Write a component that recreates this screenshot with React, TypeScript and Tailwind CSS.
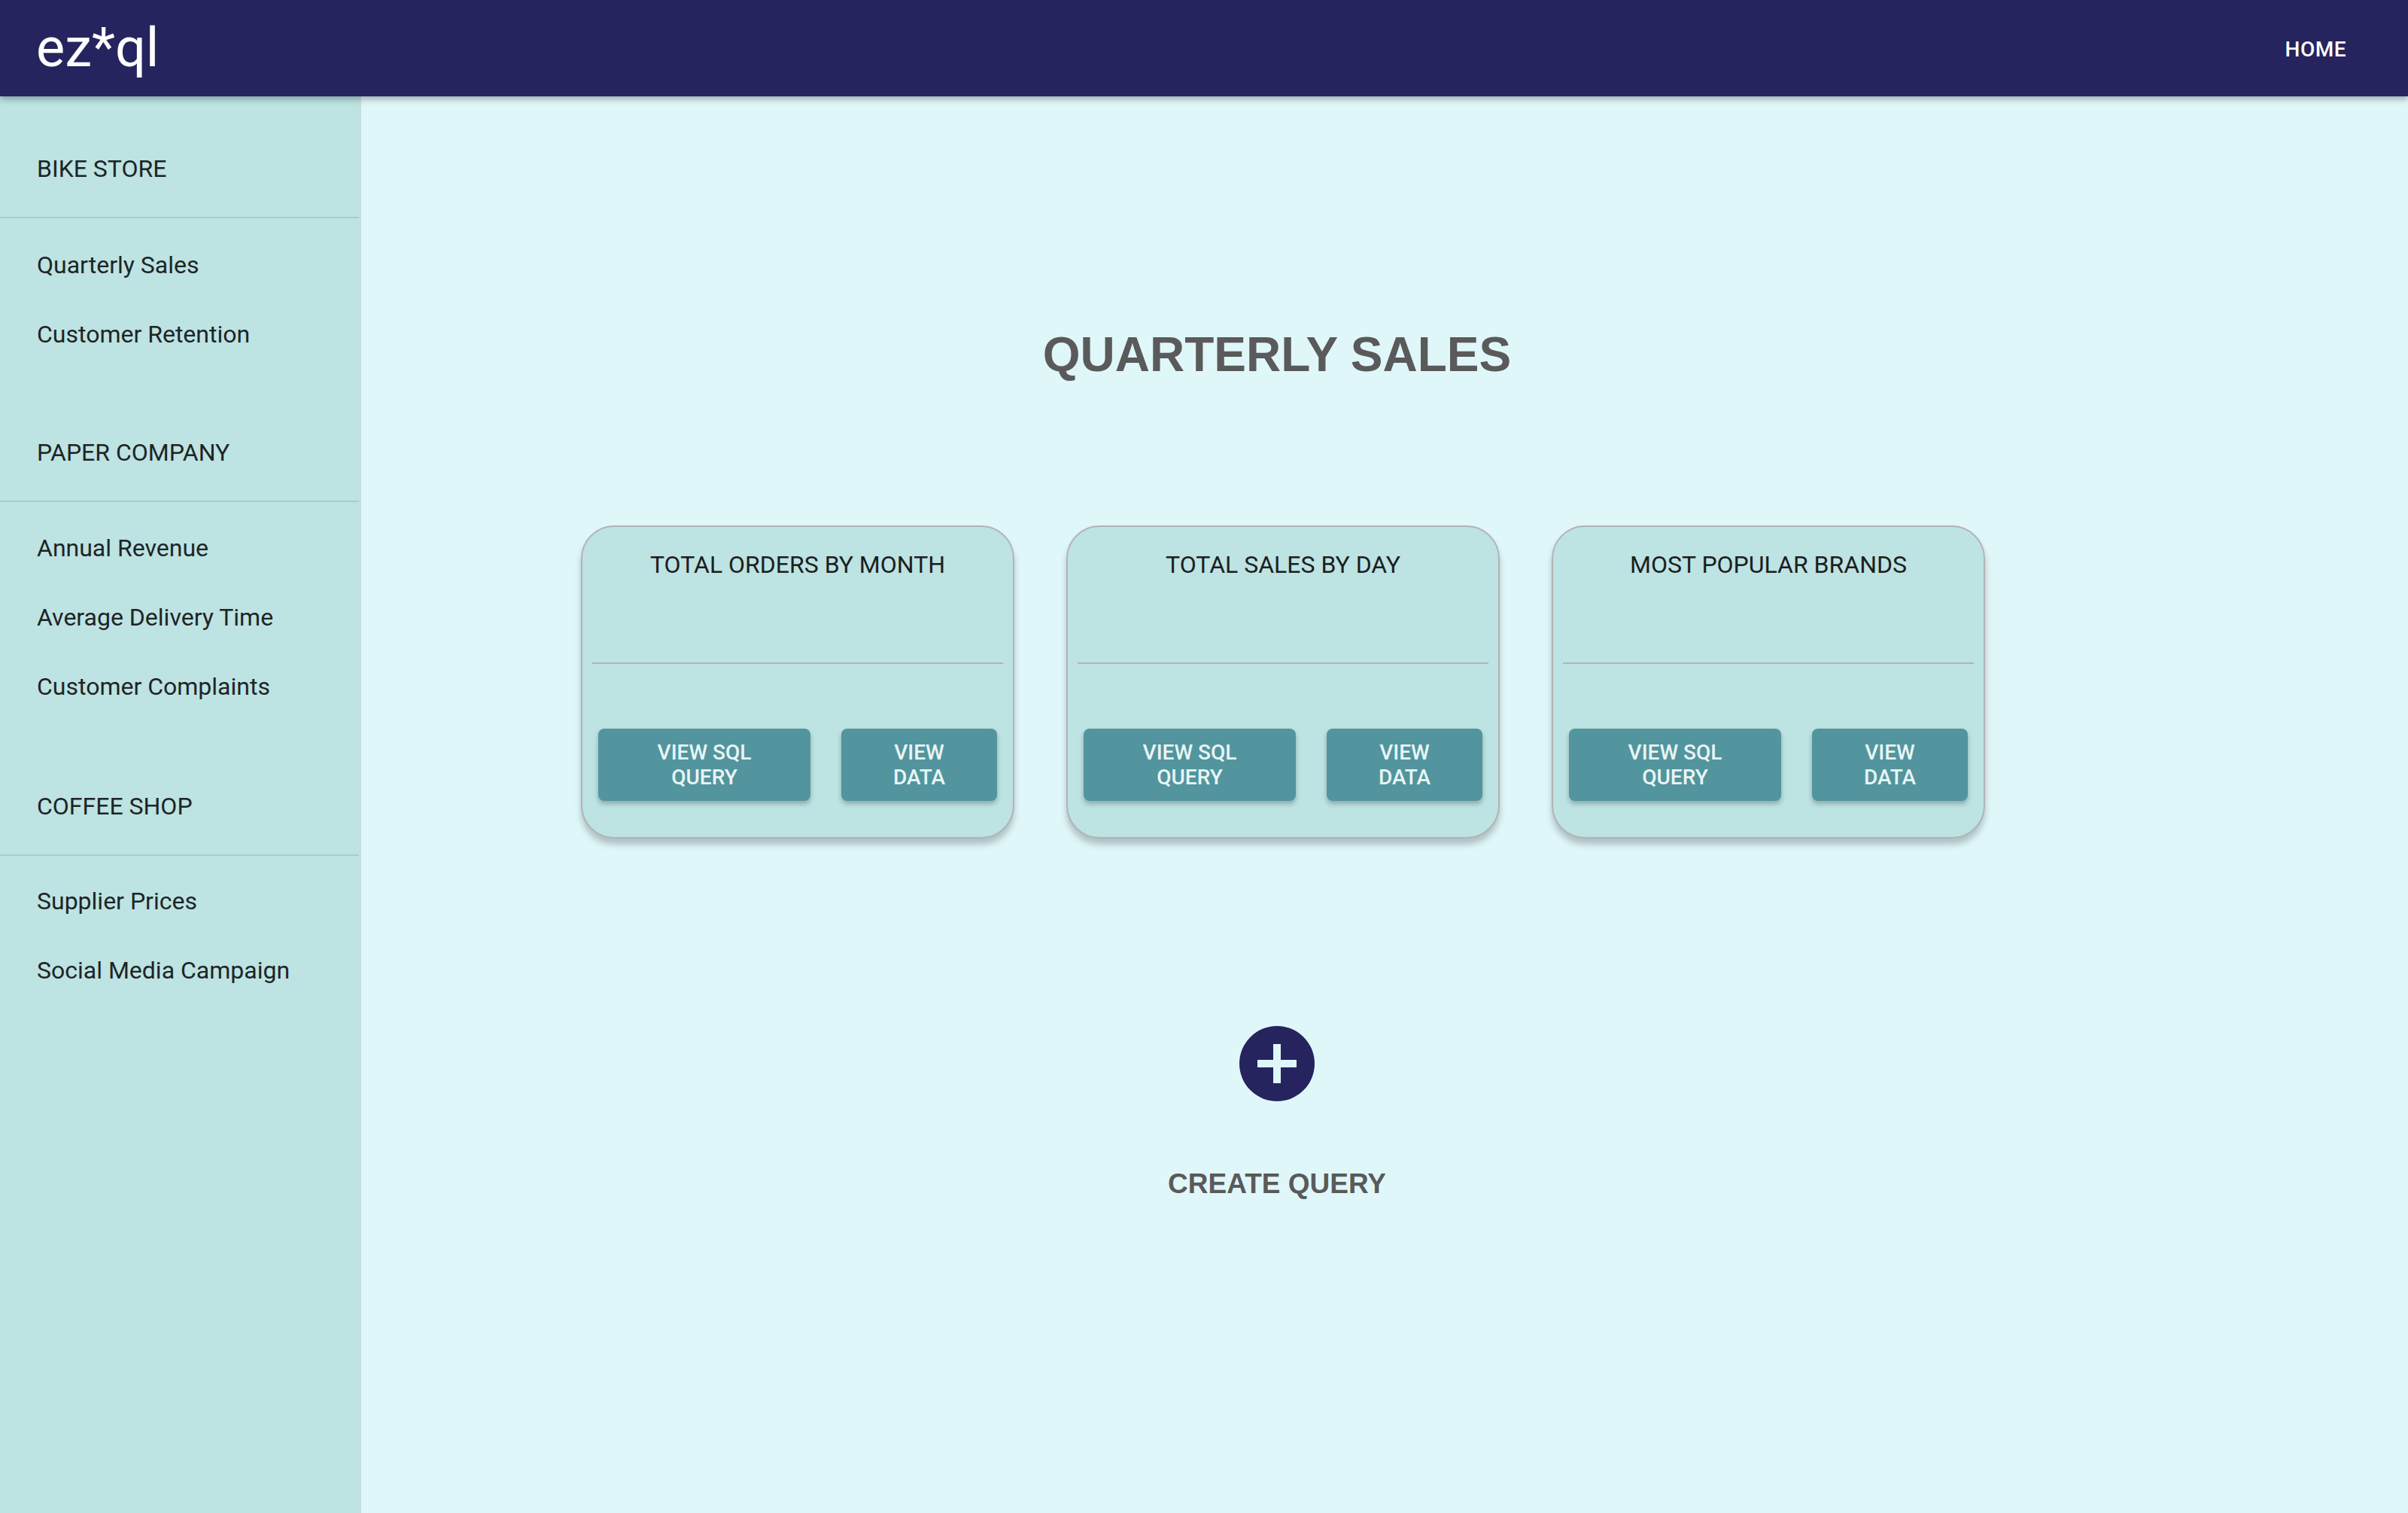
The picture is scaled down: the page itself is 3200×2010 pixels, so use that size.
import React from "react";

const roboto = { fontFamily: "Roboto, 'Noto Sans', sans-serif" };

function Section({
  title,
  items,
  topGap,
  listGap,
}: {
  title: string;
  items: string[];
  topGap: string;
  listGap: string;
}) {
  return (
    <div className={topGap}>
      <div className="h-[48px] flex items-center pl-[49px] text-[32px] text-[#1d2525]">{title}</div>
      <div className="mt-[40px] h-[2px] bg-[#a6cccd]" />
      <div className={listGap}>
        {items.map((it) => (
          <div key={it} className="h-[92px] flex items-center pl-[49px] text-[32px] text-[#1d2525]">
            {it}
          </div>
        ))}
      </div>
    </div>
  );
}

function Card({ title }: { title: string }) {
  return (
    <div className="w-[576px] h-[416px] rounded-[44px] border-2 border-[#b3b3b3] bg-[#bde3e3] shadow-[0_8px_8px_rgba(0,0,0,0.22)] flex flex-col">
      <div className="pt-[26px] h-[74px] flex items-end justify-center">
        <div className="h-[48px] flex items-center text-[32px] text-[#1b2020] leading-none">{title}</div>
      </div>
      <div className="mt-[106px] mx-[13px] h-[2px] bg-[#b3b3b3]" />
      <div className="mt-[86px] px-[21px] flex justify-between">
        <button className="w-[282px] h-[96px] rounded-[8px] bg-[#52959e] text-[#e9f5f5] text-[28px] font-medium leading-[33px] shadow-[0_4px_6px_rgba(0,0,0,0.25)]">
          VIEW SQL
          <br />
          QUERY
        </button>
        <button className="w-[207px] h-[96px] rounded-[8px] bg-[#52959e] text-[#e9f5f5] text-[28px] font-medium leading-[33px] shadow-[0_4px_6px_rgba(0,0,0,0.25)]">
          VIEW
          <br />
          DATA
        </button>
      </div>
    </div>
  );
}

export default function App() {
  return (
    <div className="w-full h-[2010px] flex flex-col bg-[#e0f7fa] overflow-hidden" style={roboto}>
      <header className="relative z-10 h-[128px] shrink-0 bg-[#25245e] flex items-center justify-between pl-[48px] pr-[82px] shadow-[0_4px_8px_rgba(0,0,0,0.3)]">
        <div className="text-white text-[72px] leading-none">ez*ql</div>
        <div className="mt-[3px] text-white text-[28px] font-medium tracking-[0.5px]">HOME</div>
      </header>
      <div className="flex flex-1">
        <aside className="w-[480px] shrink-0 bg-[#bde3e3] border-r-[3px] border-[#cfdcdc]">
          <Section
            title="BIKE STORE"
            items={["Quarterly Sales", "Customer Retention"]}
            topGap="pt-[72px]"
            listGap="mt-[16px]"
          />
          <Section
            title="PAPER COMPANY"
            items={["Annual Revenue", "Average Delivery Time", "Customer Complaints"]}
            topGap="pt-[87px]"
            listGap="mt-[15px]"
          />
          <Section
            title="COFFEE SHOP"
            items={["Supplier Prices", "Social Media Campaign"]}
            topGap="pt-[89px]"
            listGap="mt-[14px]"
          />
        </aside>
        <main className="flex-1 flex flex-col items-center pr-[286px]">
          <h1
            className="mt-[311px] h-[64px] leading-[64px] text-[64px] font-bold text-[#5a5a5a]"
            style={{ fontFamily: "'Liberation Sans', Arial, sans-serif" }}
          >
            QUARTERLY SALES
          </h1>
          <div className="mt-[195px] ml-[16px] flex gap-[69px]">
            <Card title="TOTAL ORDERS BY MONTH" />
            <Card title="TOTAL SALES BY DAY" />
            <Card title="MOST POPULAR BRANDS" />
          </div>
          <button className="mt-[249px] w-[100px] h-[100px] rounded-full bg-[#25245e] flex items-center justify-center">
            <svg width="52" height="52" viewBox="0 0 52 52">
              <rect x="21" y="0" width="10" height="52" fill="#e0f7fa" />
              <rect x="0" y="21" width="52" height="10" fill="#e0f7fa" />
            </svg>
          </button>
          <div
            className="mt-[88px] h-[44px] leading-[44px] text-[37px] font-bold text-[#5a5a5a]"
            style={{ fontFamily: "'Liberation Sans', Arial, sans-serif" }}
          >
            CREATE QUERY
          </div>
        </main>
      </div>
    </div>
  );
}
